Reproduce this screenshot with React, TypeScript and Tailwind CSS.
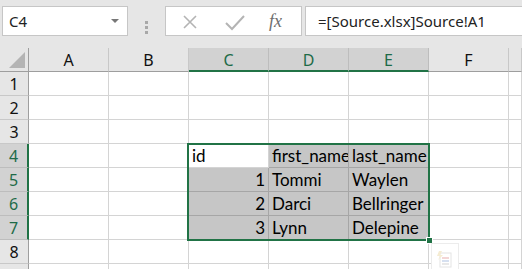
import React from "react";

const COLS = ["A", "B", "C", "D", "E", "F", ""];
const SEL_COLS = ["C", "D", "E"];
const SEL_ROWS = [4, 5, 6, 7];

type Cell = { text: string; align?: "left" | "right" };

const DATA: Record<string, Cell> = {
  C4: { text: "id" },
  D4: { text: "first_name" },
  E4: { text: "last_name" },
  C5: { text: "1", align: "right" },
  D5: { text: "Tommi" },
  E5: { text: "Waylen" },
  C6: { text: "2", align: "right" },
  D6: { text: "Darci" },
  E6: { text: "Bellringer" },
  C7: { text: "3", align: "right" },
  D7: { text: "Lynn" },
  E7: { text: "Delepine" },
};

const uiFont = { fontFamily: '"Noto Sans", "Open Sans", sans-serif' };
const cellFont = { fontFamily: 'Lato, "Open Sans", sans-serif' };

const FormulaBar: React.FC = () => (
  <div className="flex h-[48px] bg-[#e6e6e6] pt-[6px]" style={uiFont}>
    <div className="ml-[2px] flex h-[30px] w-[126px] items-center justify-between border border-[#c6c6c6] bg-white pl-[6px] pr-[8px]">
      <span className="text-[15px] text-[#222]">C4</span>
      <span className="h-0 w-0 border-x-[4px] border-t-[4px] border-x-transparent border-t-[#777]" />
    </div>
    <div className="flex w-[37px] flex-col items-center justify-center gap-[2px]">
      <span className="h-[3px] w-[3px] bg-[#a8a8a8]" />
      <span className="h-[3px] w-[3px] bg-[#a8a8a8]" />
      <span className="h-[3px] w-[3px] bg-[#a8a8a8]" />
    </div>
    <div className="flex h-[30px] w-[137px] items-center border border-[#c6c6c6] bg-white">
      <svg width="46" height="30" viewBox="0 0 46 30" className="shrink-0">
        <path d="M18 10 L30 22 M30 10 L18 22" stroke="#b4b4b4" strokeWidth="1.6" fill="none" />
      </svg>
      <svg width="46" height="30" viewBox="0 0 46 30" className="shrink-0">
        <path d="M14 17 L20 23 L32 10" stroke="#b4b4b4" strokeWidth="2" fill="none" />
      </svg>
      <span
        className="ml-[11px] text-[18px] italic text-[#6e6e6e]"
        style={{ fontFamily: '"Liberation Serif", serif' }}
      >
        fx
      </span>
    </div>
    <div className="ml-[3px] flex h-[30px] flex-1 items-center border border-r-0 border-[#c6c6c6] bg-white pl-[12px]">
      <span className="text-[15px] text-[#222]">=[Source.xlsx]Source!A1</span>
    </div>
  </div>
);

const Corner: React.FC = () => (
  <div className="relative h-[24px] border-b border-r border-[#9e9e9e] bg-[#e6e6e6]">
    <span className="absolute bottom-[3px] right-[3px] h-0 w-0 border-b-[16px] border-l-[16px] border-b-[#b4b4b4] border-l-transparent" />
  </div>
);

const ColHeader: React.FC<{ label: string }> = ({ label }) => {
  const sel = SEL_COLS.includes(label);
  return (
    <div
      className={`flex h-[24px] items-center justify-center border-r pt-[1px] text-[16px] ${
        sel
          ? "border-b-2 border-r-[#bdbdbd] border-b-[#217346] bg-[#d2d2d2] text-[#1e6b48]"
          : "border-b border-r-[#c8c8c8] border-b-[#9e9e9e] bg-[#e6e6e6] text-[#111]"
      }`}
      style={uiFont}
    >
      {label}
    </div>
  );
};

const RowHeader: React.FC<{ n: number }> = ({ n }) => {
  const sel = SEL_ROWS.includes(n);
  return (
    <div
      className={`flex h-[24px] items-center justify-center border-b pt-[1px] text-[16px] ${
        sel
          ? "border-r-2 border-b-[#bdbdbd] border-r-[#217346] bg-[#d2d2d2] text-[#1e6b48]"
          : "border-r border-b-[#c8c8c8] border-r-[#9e9e9e] bg-[#e6e6e6] text-[#111]"
      }`}
      style={uiFont}
    >
      {n}
    </div>
  );
};

const GridCell: React.FC<{ col: string; row: number }> = ({ col, row }) => {
  const key = `${col}${row}`;
  const cell = DATA[key];
  const inSel = SEL_COLS.includes(col) && SEL_ROWS.includes(row);
  const active = key === "C4";
  const bg = inSel && !active ? "bg-[#c6c6c6] border-[#a6a6a6]" : "bg-white border-[#d4d4d4]";
  return (
    <div
      className={`flex h-[24px] items-center overflow-hidden whitespace-nowrap border-b border-r px-[3px] pt-[1px] text-[17px] text-black ${bg} ${
        cell?.align === "right" ? "justify-end" : "justify-start"
      }`}
      style={cellFont}
    >
      {cell?.text}
    </div>
  );
};

export default function App() {
  const rows = [1, 2, 3, 4, 5, 6, 7, 8, 9];
  return (
    <div className="h-[269px] w-[522px] overflow-hidden bg-white">
      <FormulaBar />
      <div className="relative">
        <div className="grid grid-cols-[29px_repeat(6,80px)_1fr]">
          <Corner />
          {COLS.map((c, i) => (
            <ColHeader key={i} label={c} />
          ))}
          {rows.map((r) => (
            <React.Fragment key={r}>
              <RowHeader n={r} />
              {COLS.map((c, i) => (
                <GridCell key={i} col={c || "G"} row={r} />
              ))}
            </React.Fragment>
          ))}
        </div>
        {/* selection outline + fill handle */}
        <div className="pointer-events-none absolute left-[187px] top-[95px] h-[98px] w-[243px] border-2 border-[#217346]" />
        <div className="absolute left-[426px] top-[189px] h-[7px] w-[7px] border border-white bg-[#217346]" />
        {/* paste options button (faded) */}
        <div className="absolute left-[431px] top-[195px] flex h-[30px] w-[28px] items-start justify-center border border-[#ececec] bg-white pt-[6px]">
          <svg width="18" height="20" viewBox="0 0 18 20">
            <rect x="4" y="3" width="11" height="14" fill="none" stroke="#e4e4e4" />
            <rect x="6" y="7" width="7" height="2" fill="#f3d6d6" />
            <rect x="6" y="10" width="7" height="2" fill="#d6e0f0" />
            <rect x="6" y="13" width="7" height="2" fill="#e8e8e8" />
            <path d="M3 1 L6 1 L4 5 L7 5 L2 10 L4 6 L1 6 Z" fill="#f5ecd2" />
          </svg>
        </div>
      </div>
    </div>
  );
}
